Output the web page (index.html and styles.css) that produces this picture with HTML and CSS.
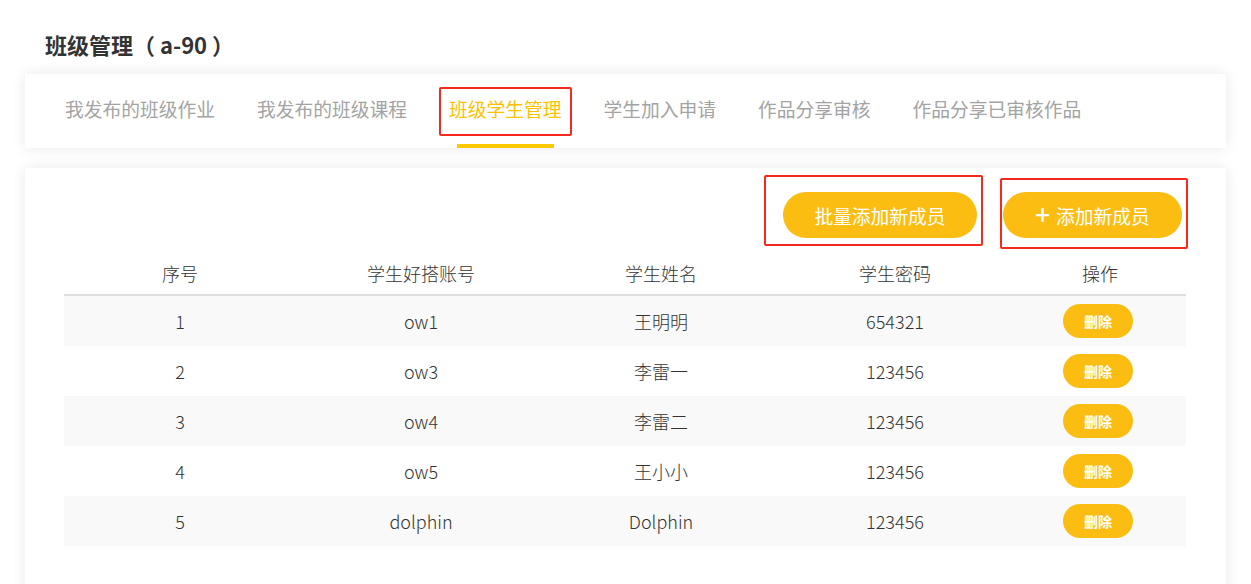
FILE: index.html
```html
<!DOCTYPE html>
<html lang="zh">
<head>
<meta charset="utf-8">
<link rel="stylesheet" href="styles.css">
</head>
<body>
<div class="page">
  <h1 class="title">班级管理（ a-90 ）</h1>
  <nav class="tabs card">
    <a class="tab">我发布的班级作业</a>
    <a class="tab">我发布的班级课程</a>
    <a class="tab active"><span class="tab-text">班级学生管理<span class="mark mark-tab"></span></span><span class="bar"></span></a>
    <a class="tab">学生加入申请</a>
    <a class="tab">作品分享审核</a>
    <a class="tab">作品分享已审核作品</a>
  </nav>
  <section class="panel card">
    <div class="actions">
      <button class="btn btn-batch">批量添加新成员<span class="mark mark-b1"></span></button>
      <button class="btn btn-add"><span class="plus">+</span>添加新成员<span class="mark mark-b2"></span></button>
    </div>
    <div class="table">
      <div class="row head">
        <div>序号</div><div>学生好搭账号</div><div>学生姓名</div><div>学生密码</div><div>操作</div>
      </div>
      <div class="row odd"><div>1</div><div>ow1</div><div>王明明</div><div>654321</div><div><button class="del">删除</button></div></div>
      <div class="row"><div>2</div><div>ow3</div><div>李雷一</div><div>123456</div><div><button class="del">删除</button></div></div>
      <div class="row odd"><div>3</div><div>ow4</div><div>李雷二</div><div>123456</div><div><button class="del">删除</button></div></div>
      <div class="row"><div>4</div><div>ow5</div><div>王小小</div><div>123456</div><div><button class="del">删除</button></div></div>
      <div class="row odd"><div>5</div><div>dolphin</div><div>Dolphin</div><div>123456</div><div><button class="del">删除</button></div></div>
    </div>
  </section>
</div>
</body>
</html>
```
FILE: styles.css
```css
* { box-sizing: border-box; }
html, body { margin: 0; padding: 0; background: #fff; }
body {
  font-family: "Noto Sans CJK SC", "Noto Sans", sans-serif;
  color: #333;
  overflow: hidden;
}
.page { padding: 0 25px; height: 584px; }
.title {
  margin: 0 0 14px 20px;
  padding-top: 28px;
  font-size: 22px;
  line-height: 32px;
  font-weight: bold;
  color: #333;
  white-space: pre;
}
.card {
  background: #fff;
  box-shadow: 0 0 14px rgba(0, 0, 0, 0.09);
}
.tabs {
  display: flex;
  gap: 42px;
  height: 74px;
  padding-left: 40px;
}
.tab {
  position: relative;
  display: flex;
  flex-direction: column;
  align-items: center;
  font-size: 18.75px;
  line-height: 70px;
  height: 74px;
  color: #a3a3a3;
  white-space: nowrap;
}
.tab.active { color: #fcc100; }
.tab-text { position: relative; display: block; height: 70px; }
.bar {
  display: block;
  width: 97px;
  height: 4px;
  margin-left: 1px;
  background: #fcc800;
}
.mark {
  position: absolute;
  border: 2px solid #f52a1c;
  border-radius: 2px;
  pointer-events: none;
}
.mark-tab { left: -10px; right: -10px; top: 13px; bottom: 8px; }
.panel {
  margin-top: 20px;
  height: 440px;
  padding: 24px 39px 0;
}
.actions {
  display: flex;
  justify-content: flex-end;
  gap: 26px;
  padding-right: 5px;
}
.btn {
  position: relative;
  display: flex;
  align-items: center;
  justify-content: center;
  height: 46px;
  border: none;
  border-radius: 23px;
  background: #fcbd13;
  color: #fff;
  font-family: inherit;
  font-size: 18.75px;
  padding: 0;
}
.btn-batch { width: 194px; }
.btn-add { width: 179px; }
.plus {
  font-size: 26px;
  line-height: 26px;
  font-weight: 500;
  margin-right: 6px;
  margin-top: -2px;
}
.mark-b1 { left: -19px; right: -6px; top: -17px; bottom: -8px; }
.mark-b2 { left: -3px; right: -6px; top: -14px; bottom: -11px; }
.table { margin-top: 12px; width: 1122px; }
.row {
  display: grid;
  grid-template-columns: 232px 250px 230px 238px 172px;
  height: 50px;
  align-items: center;
  text-align: center;
  font-size: 18px;
  font-weight: 300;
  color: #333;
}
.row.head { height: 46px; border-bottom: 2px solid #dedede; align-items: start; padding-top: 10px; line-height: 26px; }
.row.odd { background: #f9f9f9; }
.del {
  width: 70px;
  height: 34px;
  border: none;
  border-radius: 17px;
  background: #fcbd13;
  color: #fff;
  font-family: inherit;
  font-size: 14px;
  font-weight: 700;
  padding: 0;
  margin-left: -4px;
}
```
